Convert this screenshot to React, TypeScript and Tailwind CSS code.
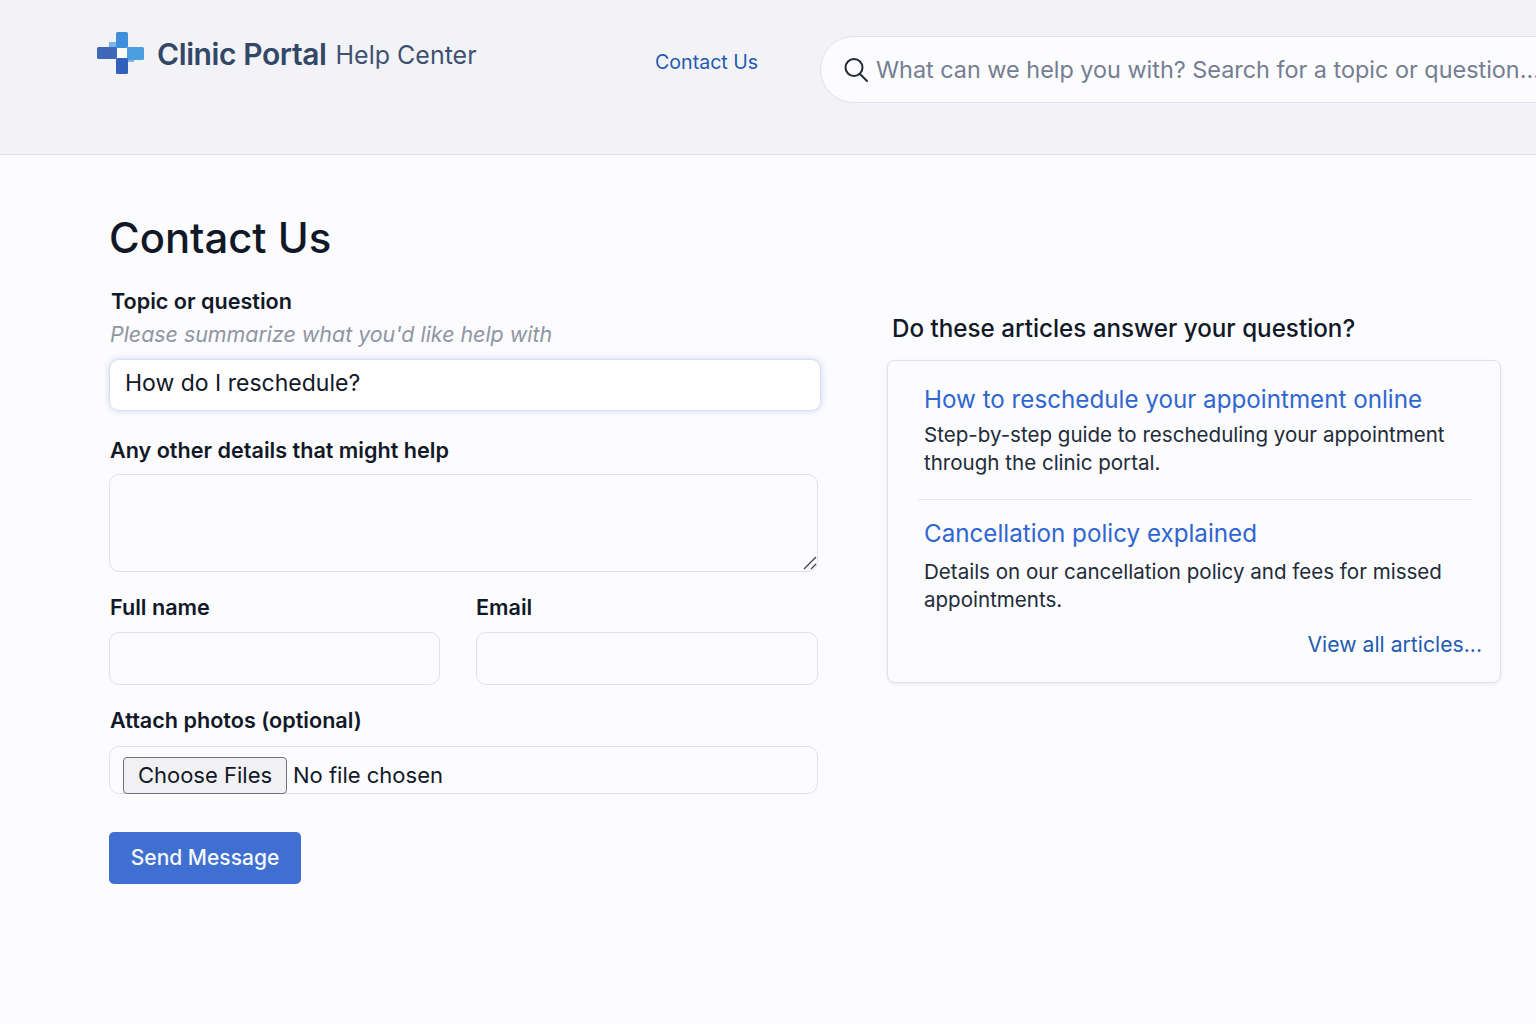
export default function App() {
  return (
    <div className="h-[1024px] w-[1536px] overflow-hidden bg-[#fcfbfe] font-['Inter','Liberation_Sans',sans-serif] text-[#111827]">
      <header className="flex h-[155px] items-start border-b border-[#e0e1e8] bg-[#f3f3f7] pl-[97px]">
        <div className="mt-[32px] flex h-[42px] w-[558px] shrink-0 items-center">
          <svg width="48" height="42" viewBox="0 0 48 42" className="shrink-0">
            <rect x="12" y="10" width="8" height="6" fill="#7db5e8" />
            <rect x="19" y="0" width="12" height="16" rx="1.5" fill="#3f90dc" />
            <rect x="0" y="15" width="20" height="12" rx="1.5" fill="#3f68b8" />
            <rect x="31" y="24" width="6" height="6" fill="#7db5e8" />
            <rect x="30" y="15" width="17" height="13" rx="1.5" fill="#4a9fe3" />
            <rect x="19" y="26" width="12" height="16" rx="1.5" fill="#2f61bd" />
            <rect x="20" y="16" width="10" height="10" fill="#ffffff" />
          </svg>
          <span className="ml-[12px] mt-[2px] text-[30px] font-semibold tracking-[-0.4px] text-[#334766]">Clinic Portal</span>
          <span className="ml-[9px] mt-[6px] text-[25px] text-[#3f5170]">Help Center</span>
        </div>
        <a className="mt-[49px] w-[165px] shrink-0 text-[19.6px] leading-[26px] text-[#1f5bb0]">Contact Us</a>
        <div className="mt-[36px] flex h-[67px] w-[800px] shrink-0 items-center rounded-[34px] border border-[#dfe2ec] bg-[#fcfbfe] pl-[22px]">
          <svg width="26" height="26" viewBox="0 0 26 26" fill="none" stroke="#1f2937" strokeWidth="2" className="shrink-0">
            <circle cx="11" cy="10.5" r="8.5" />
            <path d="M17 17l7 7" strokeLinecap="round" />
          </svg>
          <span className="ml-[7px] whitespace-nowrap text-[23.4px] text-[#747e92]">What can we help you with? Search for a topic or question...</span>
        </div>
      </header>

      <main className="flex pl-[109px]">
        <section className="w-[709px] shrink-0">
          <h1 className="mt-[58px] text-[41.8px] font-medium leading-[50px] text-[#111827]">Contact Us</h1>
          <div className="mt-[24px] pl-[2px] text-[21.6px] font-semibold leading-[28px]">Topic or question</div>
          <div className="mt-[5px] pl-[1px] text-[21.4px] italic leading-[28px] text-[#8f96a3]">Please summarize what you'd like help with</div>
          <div className="mt-[11px] flex h-[52px] w-[712px] items-center rounded-[10px] border border-[#d5e0f3] bg-white pb-[3px] pl-[15px] text-[23px] shadow-[0_0_6px_rgba(90,135,215,0.3)]">How do I reschedule?</div>
          <div className="mt-[25px] pl-[1px] text-[21.6px] font-semibold leading-[28px]">Any other details that might help</div>
          <div className="relative mt-[10px]">
            <textarea className="block h-[98px] w-full resize-none rounded-[10px] border border-[#e0e2ea] bg-[#fcfbfe]" />
            <svg width="14" height="14" viewBox="0 0 14 14" fill="none" stroke="#3a3f4a" strokeWidth="1.3" className="absolute bottom-[2px] right-[1px]">
              <path d="M1 13L13 1M8 13l5-5" />
            </svg>
          </div>
          <div className="mt-[21px] flex gap-[36px]">
            <div className="w-[331px]">
              <div className="pl-[1px] text-[21.6px] font-semibold leading-[28px]">Full name</div>
              <input className="mt-[11px] block h-[53px] w-full rounded-[10px] border border-[#e0e2ea] bg-[#fcfbfe]" />
            </div>
            <div className="flex-1">
              <div className="text-[21.6px] font-semibold leading-[28px]">Email</div>
              <input className="mt-[11px] block h-[53px] w-full rounded-[10px] border border-[#e0e2ea] bg-[#fcfbfe]" />
            </div>
          </div>
          <div className="mt-[21px] pl-[1px] text-[21.6px] font-semibold leading-[28px]">Attach photos (optional)</div>
          <div className="mt-[12px] flex h-[48px] items-center rounded-[10px] border border-[#e0e2ea] pl-[13px] text-[22px] text-[#111827]">
            <button className="mt-[11px] flex h-[37px] w-[164px] items-center justify-center rounded-[4px] border border-[#6b7280] bg-[#f1f1f3]">Choose Files</button>
            <span className="ml-[6px] mt-[11px]">No file chosen</span>
          </div>
          <button className="mt-[38px] h-[52px] w-[192px] rounded-[5px] bg-[#3f6fd1] text-[21px] font-medium text-[#f6f8ff]">Send Message</button>
        </section>

        <aside className="ml-[69px] w-[614px] shrink-0">
          <h2 className="mt-[159px] pl-[5px] text-[24.2px] font-medium leading-[30px] text-[#111827]">Do these articles answer your question?</h2>
          <div className="mt-[16px] h-[323px] rounded-[8px] border border-[#e0e2ea] bg-[#fcfbfe] pl-[36px] pr-[18px] pt-[22px] shadow-[0_1px_3px_rgba(80,90,120,0.12)]">
            <a className="block text-[24.2px] leading-[34px] text-[#2f66cf]">How to reschedule your appointment online</a>
            <p className="mt-[4px] text-[20.56px] leading-[28px] text-[#222b38]">Step-by-step guide to rescheduling your appointment through the clinic portal.</p>
            <div className="-ml-[6px] mr-[9px] mt-[22px] border-t border-[#e6e7ee]" />
            <a className="mt-[17px] block text-[24.2px] leading-[34px] text-[#2f66cf]">Cancellation policy explained</a>
            <p className="mt-[7px] text-[20.56px] leading-[28px] text-[#222b38]">Details on our cancellation policy and fees for missed appointments.</p>
            <div className="mt-[16px] text-right text-[21.2px] leading-[28px] text-[#1f5bb0]">View all articles...</div>
          </div>
        </aside>
      </main>
    </div>
  );
}
